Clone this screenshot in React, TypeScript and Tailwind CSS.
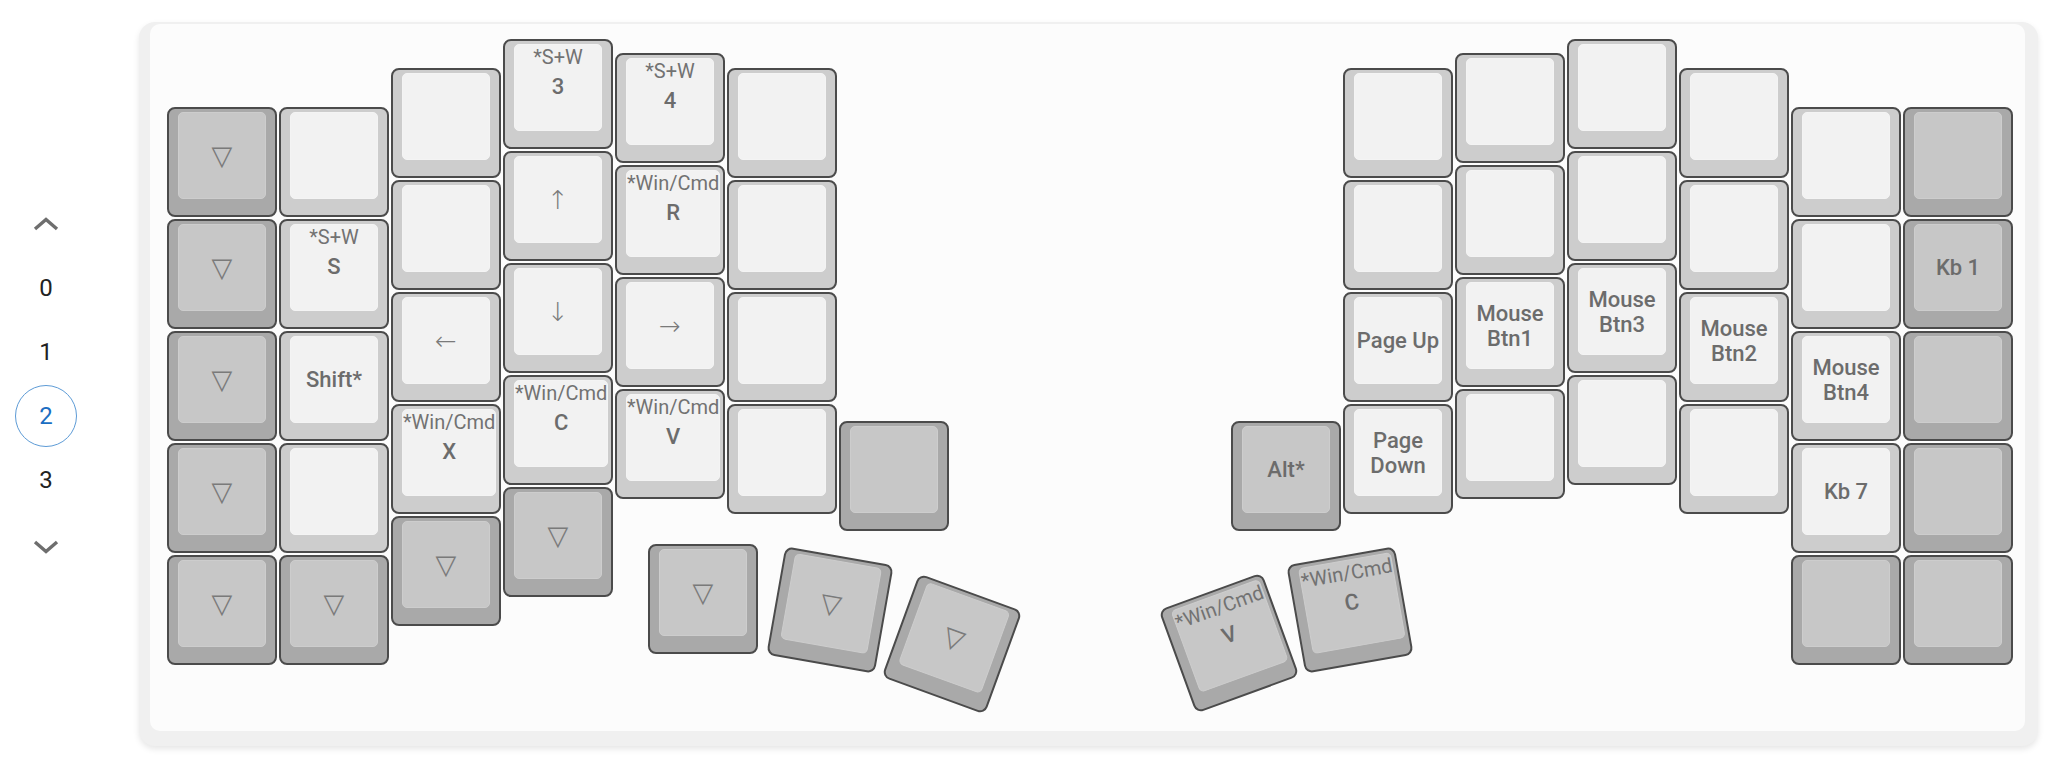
import React from "react";

type K = { t?: string; m?: string; dark?: boolean; kind?: "arrow" | "tri" };

const T: K = { dark: true, m: "▽", kind: "tri" };
const L: K = {};
const D: K = { dark: true };

function Key({ k, className = "" }: { k: K; className?: string }) {
  const outer = k.dark ? "bg-[#a9a9a9]" : "bg-[#cdcdcd]";
  const inner = k.dark
    ? "bg-[#c7c7c7] border-[#cdcdcd]"
    : "bg-[#f2f2f2] border-[#f4f4f4]";
  const lines = k.m ? k.m.split("\n") : [];
  return (
    <div
      className={`w-[110px] h-[110px] shrink-0 rounded-[8px] border-2 border-[#4b4b4b] ${outer} pt-[3px] px-[9px] pb-[16px] flex ${className}`}
    >
      <div
        className={`flex-1 rounded-[5px] border ${inner} flex flex-col items-center ${
          k.t ? "justify-start" : "justify-center"
        }`}
      >
        {k.t && (
          <div className="mt-px text-[20px] leading-[22px] text-[#727272] whitespace-nowrap">
            {k.t}
          </div>
        )}
        {k.kind === "tri" ? (
          <div className="text-[27px] leading-[28px] text-[#7a7a7a] font-['DejaVu_Sans',sans-serif]">
            {k.m}
          </div>
        ) : k.kind === "arrow" ? (
          <div className="text-[26px] leading-[28px] text-[#7a7a7a] font-light">{k.m}</div>
        ) : (
          lines.length > 0 && (
            <div
              className={`${k.t ? "mt-[6px]" : ""} text-[22px] leading-[25px] font-medium text-[#6c6c6c] text-center whitespace-nowrap`}
            >
              {lines.map((l, i) => (
                <div key={i}>{l}</div>
              ))}
            </div>
          )
        )}
      </div>
    </div>
  );
}

const leftCols: { mt: string; keys: K[] }[] = [
  { mt: "mt-[68px]", keys: [T, T, T, T, T] },
  {
    mt: "mt-[68px]",
    keys: [L, { t: "*S+W", m: "S" }, { m: "Shift*" }, L, T],
  },
  {
    mt: "mt-[29px]",
    keys: [L, L, { m: "←", kind: "arrow" }, { t: "*Win/Cmd", m: "X" }, T],
  },
  {
    mt: "mt-0",
    keys: [
      { t: "*S+W", m: "3" },
      { m: "↑", kind: "arrow" },
      { m: "↓", kind: "arrow" },
      { t: "*Win/Cmd", m: "C" },
      T,
    ],
  },
  {
    mt: "mt-[14px]",
    keys: [
      { t: "*S+W", m: "4" },
      { t: "*Win/Cmd", m: "R" },
      { m: "→", kind: "arrow" },
      { t: "*Win/Cmd", m: "V" },
    ],
  },
  { mt: "mt-[29px]", keys: [L, L, L, L] },
  { mt: "mt-[382px]", keys: [D] },
];

const rightCols: { mt: string; keys: K[] }[] = [
  { mt: "mt-[382px]", keys: [{ dark: true, m: "Alt*" }] },
  { mt: "mt-[29px]", keys: [L, L, { m: "Page Up" }, { m: "Page\nDown" }] },
  { mt: "mt-[14px]", keys: [L, L, { m: "Mouse\nBtn1" }, L] },
  { mt: "mt-0", keys: [L, L, { m: "Mouse\nBtn3" }, L] },
  { mt: "mt-[29px]", keys: [L, L, { m: "Mouse\nBtn2" }, L] },
  { mt: "mt-[68px]", keys: [L, L, { m: "Mouse\nBtn4" }, { m: "Kb 7" }, D] },
  { mt: "mt-[68px]", keys: [D, { dark: true, m: "Kb 1" }, D, D, D] },
];

function Half({ cols, className = "" }: { cols: { mt: string; keys: K[] }[]; className?: string }) {
  return (
    <div className={`flex gap-[2px] items-start ${className}`}>
      {cols.map((c, i) => (
        <div key={i} className={`flex flex-col gap-[2px] ${c.mt}`}>
          {c.keys.map((k, j) => (
            <Key key={j} k={k} />
          ))}
        </div>
      ))}
    </div>
  );
}

function Chevron({ up }: { up?: boolean }) {
  return (
    <svg width="26" height="14" viewBox="0 0 26 14" fill="none">
      <path
        d={up ? "M2 12 L13 2.5 L24 12" : "M2 2 L13 11.5 L24 2"}
        stroke="#6e6e6e"
        strokeWidth="3.4"
        strokeLinejoin="miter"
      />
    </svg>
  );
}

export default function App() {
  return (
    <div className="w-[2068px] h-[770px] bg-white flex items-start font-['Roboto','DejaVu_Sans',sans-serif]">
      <div className="w-[92px] shrink-0 pt-[192px] flex flex-col items-center text-[24px] text-[#222222]">
        <div className="h-[64px] flex items-center justify-center">
          <Chevron up />
        </div>
        <div className="h-[64px] flex items-center justify-center">0</div>
        <div className="h-[64px] flex items-center justify-center">1</div>
        <div className="h-[64px] flex items-center justify-center">
          <div className="w-[62px] h-[62px] rounded-full border-[1.5px] border-[#5d9bd6] flex items-center justify-center text-[#1b6ec2]">
            2
          </div>
        </div>
        <div className="h-[64px] flex items-center justify-center">3</div>
        <div className="h-[64px] flex items-center justify-center pt-[6px]">
          <Chevron />
        </div>
      </div>

      <div className="ml-[47px] mt-[22px] w-[1899px] h-[724px] shrink-0 rounded-[16px] bg-[#f0f0f0] shadow-[0_3px_6px_rgba(0,0,0,0.10)] pl-[11px] pt-[2px] pr-[13px] pb-[15px] flex">
        <div className="relative flex-1 rounded-[10px] bg-[#fcfcfc] pl-[17px] pt-[15px] flex items-start">
          <Half cols={leftCols} />
          <Half cols={rightCols} className="ml-[282px]" />

          {/* thumb cluster keys placed on the keyboard canvas */}
          <Key k={T} className="absolute left-[498px] top-[520px]" />
          <Key k={T} className="absolute left-[625px] top-[531px] rotate-[10deg]" />
          <Key k={T} className="absolute left-[747px] top-[565px] rotate-[20deg]" />
          <Key
            k={{ dark: true, t: "*Win/Cmd", m: "V" }}
            className="absolute left-[1024px] top-[564px] -rotate-[20deg]"
          />
          <Key
            k={{ dark: true, t: "*Win/Cmd", m: "C" }}
            className="absolute left-[1145px] top-[531px] -rotate-[10deg]"
          />
        </div>
      </div>
    </div>
  );
}
